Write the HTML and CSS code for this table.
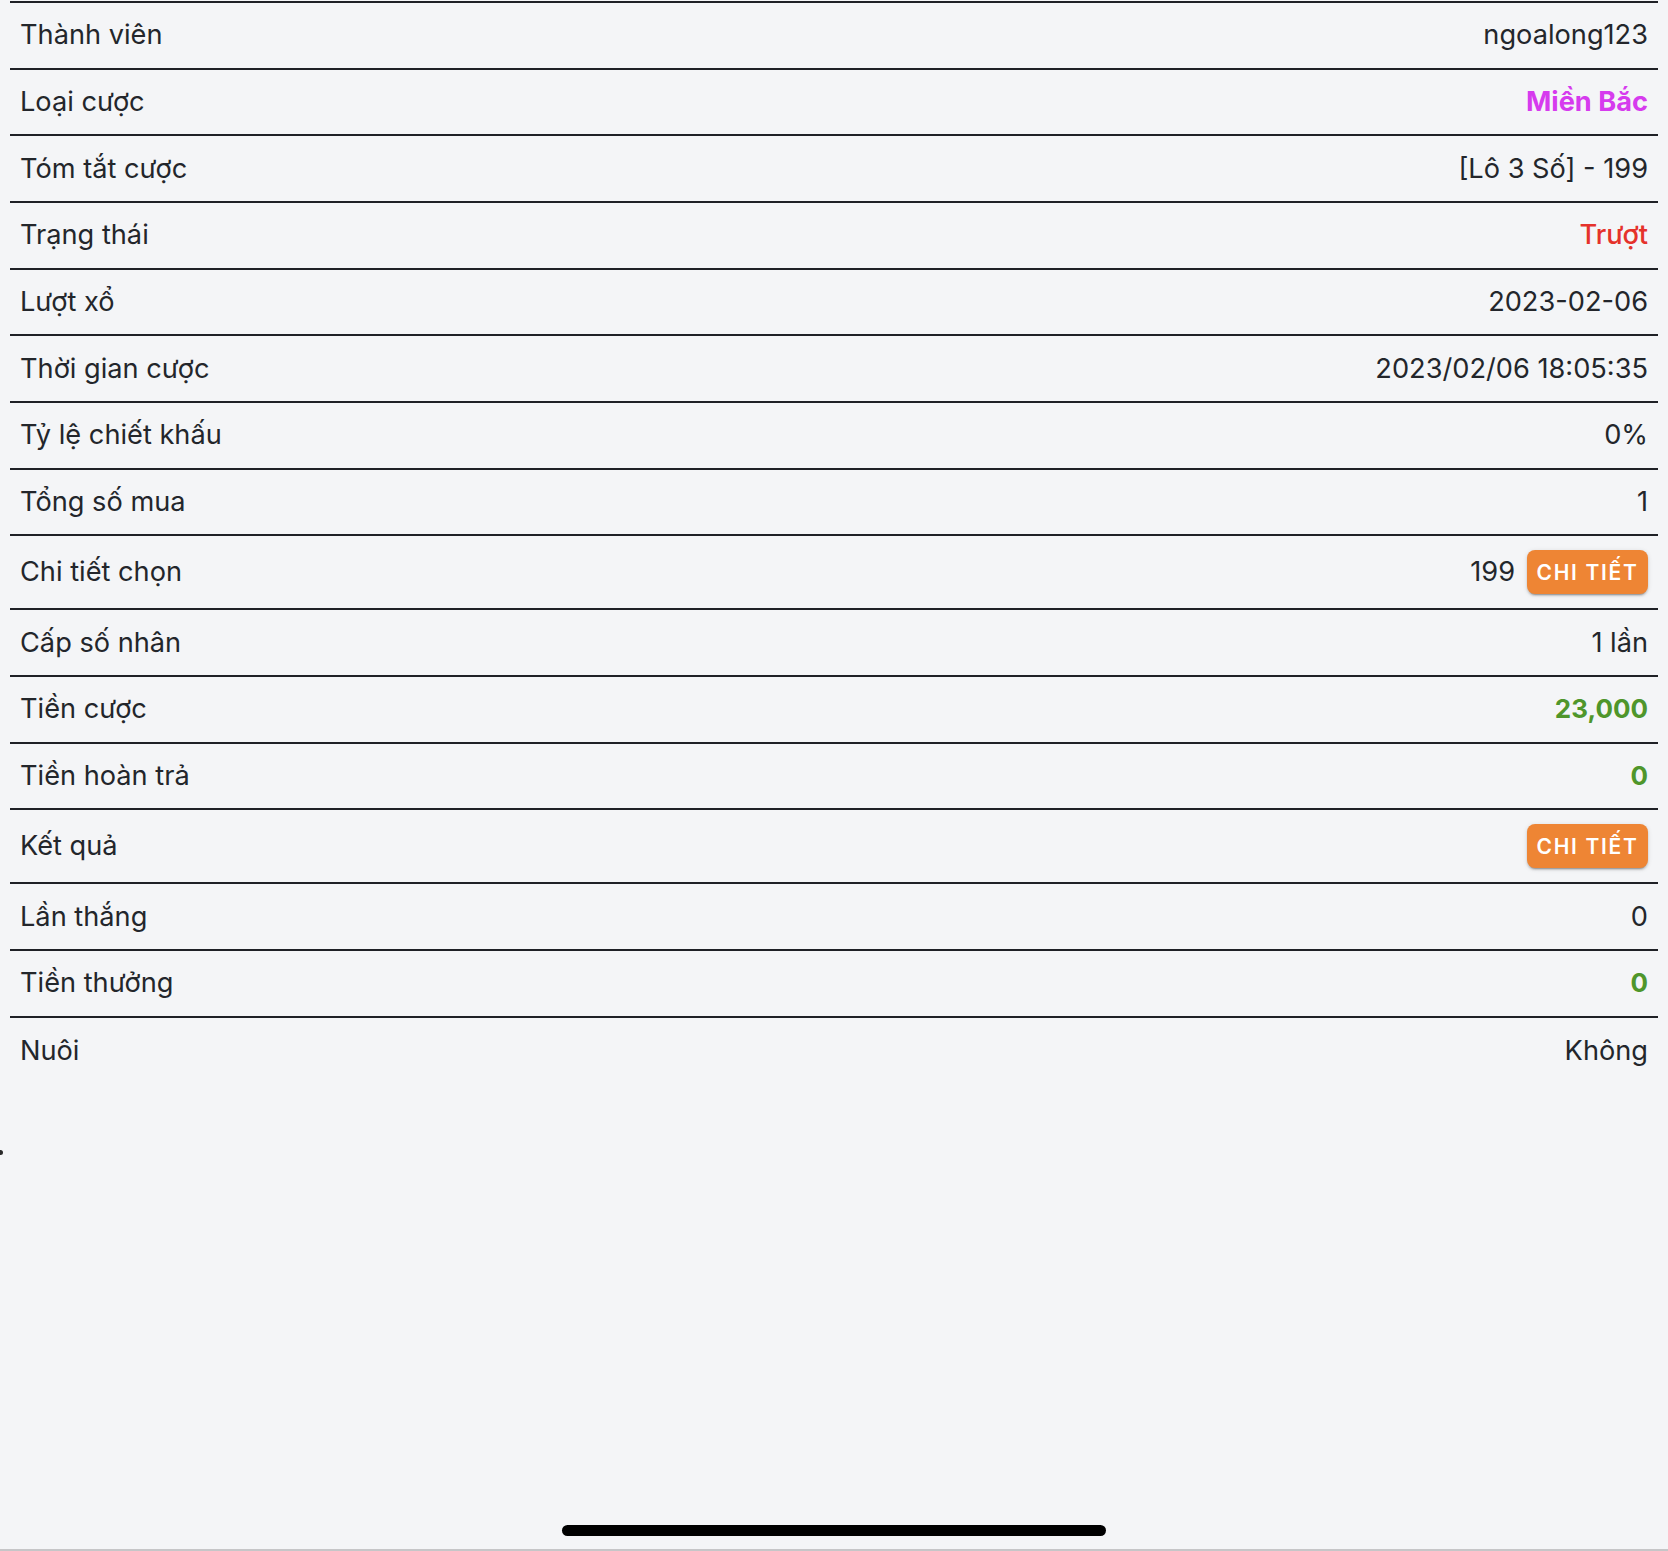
FILE: index.html
```html
<!DOCTYPE html>
<html lang="vi">
<head>
<meta charset="utf-8">
<title>Chi tiết cược</title>
<link rel="stylesheet" href="styles.css">
</head>
<body>
<div class="screen">
  <div class="detail-list">
    <div class="row"><span class="label">Thành viên</span><span class="value">ngoalong123</span></div>
    <div class="row"><span class="label">Loại cược</span><span class="value value--magenta">Miền Bắc</span></div>
    <div class="row"><span class="label">Tóm tắt cược</span><span class="value">[Lô 3 Số] - 199</span></div>
    <div class="row"><span class="label">Trạng thái</span><span class="value value--red">Trượt</span></div>
    <div class="row"><span class="label">Lượt xổ</span><span class="value">2023-02-06</span></div>
    <div class="row"><span class="label">Thời gian cược</span><span class="value">2023/02/06 18:05:35</span></div>
    <div class="row"><span class="label">Tỷ lệ chiết khấu</span><span class="value">0%</span></div>
    <div class="row"><span class="label">Tổng số mua</span><span class="value">1</span></div>
    <div class="row row--action"><span class="label">Chi tiết chọn</span><span class="value value--group"><span>199</span><button class="btn-detail" type="button">Chi tiết</button></span></div>
    <div class="row"><span class="label">Cấp số nhân</span><span class="value">1 lần</span></div>
    <div class="row"><span class="label">Tiền cược</span><span class="value value--green">23,000</span></div>
    <div class="row"><span class="label">Tiền hoàn trả</span><span class="value value--green">0</span></div>
    <div class="row row--action"><span class="label">Kết quả</span><span class="value value--group"><button class="btn-detail" type="button">Chi tiết</button></span></div>
    <div class="row"><span class="label">Lần thắng</span><span class="value">0</span></div>
    <div class="row"><span class="label">Tiền thưởng</span><span class="value value--green">0</span></div>
    <div class="row row--last"><span class="label">Nuôi</span><span class="value">Không</span></div>
  </div>
  <span class="edge-dot"></span>
  <div class="home-indicator"></div>
</div>
</body>
</html>
```

FILE: styles.css
```css
html, body {
  margin: 0;
  padding: 0;
  background: #f4f5f7;
}

body {
  font-family: Inter, "Noto Sans", "DejaVu Sans", sans-serif;
  color: #23262b;
}

.screen {
  position: relative;
  box-sizing: border-box;
  min-height: 1551px;
  padding-top: 1px;
  border-bottom: 2px solid #c6c6c8;
}

.detail-list {
  margin: 0 10px;
  border-top: 2px solid #1f2126;
}

.row {
  box-sizing: border-box;
  display: flex;
  align-items: center;
  justify-content: space-between;
  height: 66.67px;
  padding: 0 10px;
  border-bottom: 2px solid #1f2126;
  font-size: 27.2px;
  line-height: 32px;
}

.row--action {
  height: 74px;
}

.row--last {
  border-bottom: none;
}

.value {
  text-align: right;
}

.value--magenta {
  color: #d63bee;
  font-weight: 700;
}

.value--red {
  color: #e5322b;
  font-weight: 500;
}

.value--green {
  color: #4f962b;
  font-weight: 700;
  font-size: 26px;
}

.value--group {
  display: flex;
  align-items: center;
  gap: 12px;
}

.btn-detail {
  box-sizing: border-box;
  height: 44px;
  width: 121px;
  padding: 0 8px;
  border: none;
  border-radius: 8px;
  background: #ee8534;
  color: #ffffff;
  font-family: Inter, "Noto Sans", sans-serif;
  font-size: 21px;
  font-weight: 600;
  letter-spacing: 0.08em;
  text-transform: uppercase;
  box-shadow: 0 3px 1px -2px rgba(0,0,0,0.2), 0 2px 2px 0 rgba(0,0,0,0.14), 0 1px 5px 0 rgba(0,0,0,0.12);
}

.edge-dot {
  position: absolute;
  left: 0;
  top: 1150px;
  width: 3px;
  height: 5px;
  border-radius: 0 3px 3px 0;
  background: #2a2a2a;
}

.home-indicator {
  position: absolute;
  left: 562px;
  bottom: 13px;
  width: 544px;
  height: 11px;
  border-radius: 6px;
  background: #000000;
}
```
